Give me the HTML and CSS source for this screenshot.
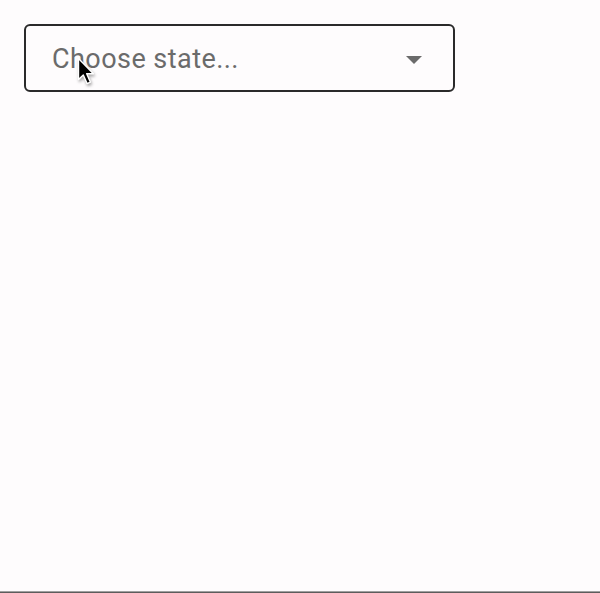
FILE: index.html
```html
<!DOCTYPE html>
<html lang="en">
<head>
<meta charset="utf-8">
<title>Choose state</title>
<link rel="stylesheet" href="styles.css">
</head>
<body>
<main class="page">
  <div class="select">
    <span class="placeholder">Choose state...</span>
    <svg class="caret" width="16" height="8" viewBox="0 0 16 8" aria-hidden="true"><path d="M0 0h16L8 8z" fill="#6b6b6b"/></svg>
    <svg class="cursor" width="18" height="29" viewBox="0 0 18 29" aria-hidden="true">
      <path d="M1.5 1.5v21l4.8-4.5 3.8 8.6 3.3-1.5-3.7-8.4h6.7z" fill="#000" stroke="#fff" stroke-width="1.4" stroke-linejoin="round"/>
    </svg>
  </div>
</main>
<div class="baseline"></div>
</body>
</html>
```
FILE: styles.css
```css
html, body {
  margin: 0;
  padding: 0;
}
body {
  background: #fefcfd;
  font-family: Roboto, "Noto Sans", sans-serif;
  min-height: 100vh;
  display: flex;
  flex-direction: column;
}
.page {
  flex: 1;
  padding: 24px;
}
.select {
  position: relative;
  box-sizing: border-box;
  width: 431px;
  height: 68px;
  border: 2px solid #2a2a2a;
  border-radius: 6px;
  display: flex;
  align-items: center;
  justify-content: space-between;
  padding: 0 31px 0 26px;
}
.placeholder {
  font-size: 27px;
  line-height: 32px;
  letter-spacing: 0.45px;
  color: #6b6b6b;
  margin-top: 2px;
}
.caret {
  display: block;
  margin-top: 3px;
}
.cursor {
  position: absolute;
  left: 51px;
  top: 31px;
  filter: drop-shadow(1px 2px 1.5px rgba(0,0,0,0.35));
}
.baseline {
  height: 1px;
  border-top: 1px solid #a0a0a0;
  background: #5c5c5c;
}
```
